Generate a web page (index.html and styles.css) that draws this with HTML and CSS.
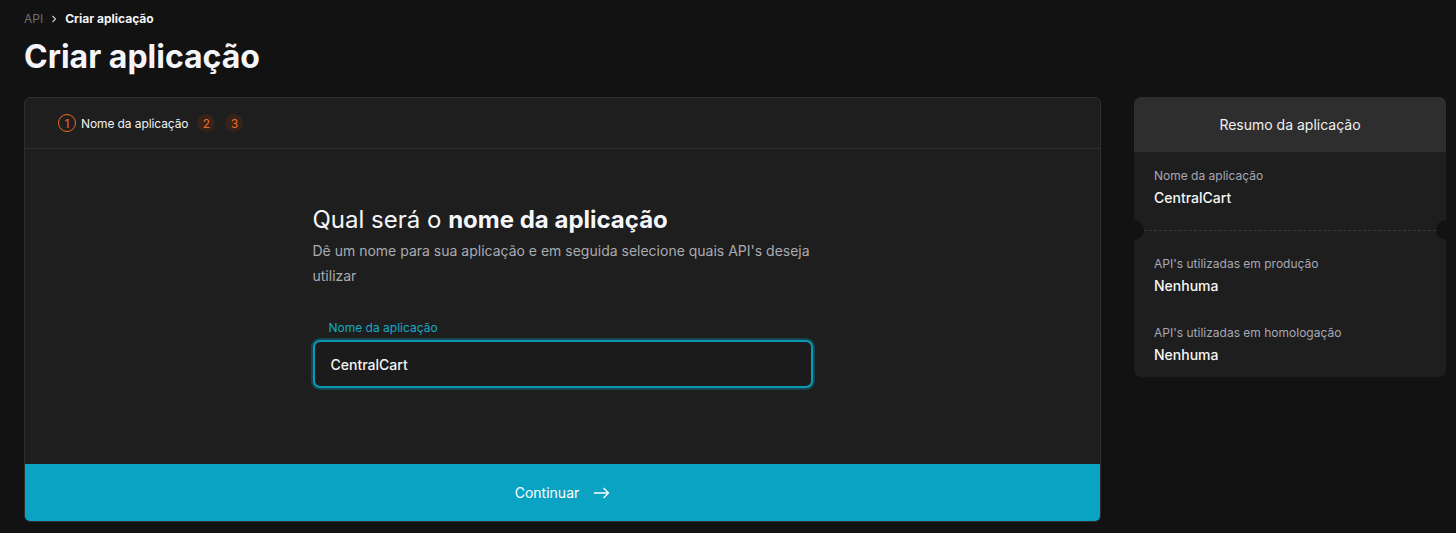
FILE: index.html
```html
<!DOCTYPE html>
<html lang="pt-BR">
<head>
<meta charset="UTF-8">
<meta name="viewport" content="width=device-width, initial-scale=1.0">
<title>Criar aplicação</title>
<link rel="stylesheet" href="styles.css">
</head>
<body>
<div class="page">
    <div class="breadcrumb">
        <span class="crumb-link">API</span>
        <svg class="crumb-sep" width="8" height="8" viewBox="0 0 8 8"><path d="M2.5 1 L5.5 4 L2.5 7" fill="none" stroke="#cfcfcf" stroke-width="1.1"/></svg>
        <span class="crumb-current">Criar aplicação</span>
    </div>
    <h1 class="page-title">Criar aplicação</h1>

    <div class="layout">
        <div class="card">
            <div class="stepper">
                <span class="step-num active">1</span>
                <span class="step-label">Nome da aplicação</span>
                <span class="step-num">2</span>
                <span class="step-num">3</span>
            </div>

            <div class="card-body">
                <div class="form-box">
                    <h2 class="question">Qual será o <b>nome da aplicação</b></h2>
                    <p class="hint">Dê um nome para sua aplicação e em seguida selecione quais API's deseja utilizar</p>

                    <label class="field-label" for="app-name">Nome da aplicação</label>
                    <input class="field-input" id="app-name" type="text" value="CentralCart">
                </div>
            </div>

            <button class="continue-btn">
                <span>Continuar</span>
                <svg width="17" height="12" viewBox="0 0 17 12"><path d="M1 6 H15.5 M10.5 1 L15.5 6 L10.5 11" fill="none" stroke="#fff" stroke-width="1.3"/></svg>
            </button>
        </div>

        <div class="summary">
            <div class="summary-head">Resumo da aplicação</div>
            <div class="summary-part top">
                <div class="sum-label">Nome da aplicação</div>
                <div class="sum-value">CentralCart</div>
            </div>
            <div class="summary-part bottom">
                <div class="sum-label">API's utilizadas em produção</div>
                <div class="sum-value">Nenhuma</div>
                <div class="sum-label second">API's utilizadas em homologação</div>
                <div class="sum-value">Nenhuma</div>
            </div>
        </div>
    </div>
</div>
</body>
</html>
```

FILE: styles.css
```css
html, body {
    margin: 0;
    background: #121212;
    color: #f2f2f2;
    font-family: "Inter", "Noto Sans", sans-serif;
}

.page {
    padding: 11px 10px 0 24px;
}

/* breadcrumb */
.breadcrumb {
    display: flex;
    align-items: center;
    gap: 7px;
    font-size: 12px;
    line-height: 16px;
}
.crumb-link {
    color: #6e6e74;
}
.crumb-current {
    color: #f4f4f4;
    font-weight: 700;
}

.page-title {
    margin: 10px 0 0;
    font-size: 32px;
    line-height: 40px;
    font-weight: 700;
    color: #f3f5f8;
}

.layout {
    display: flex;
    align-items: flex-start;
    gap: 33px;
    margin-top: 20px;
}

/* main card */
.card {
    width: 1077px;
    background: #1e1e1e;
    border: 1px solid #2e2e2e;
    border-radius: 6px;
    overflow: hidden;
    box-sizing: border-box;
}

.stepper {
    display: flex;
    align-items: center;
    height: 50px;
    padding-left: 33px;
    border-bottom: 1px solid #2e2e2e;
}
.step-num {
    width: 18px;
    height: 18px;
    border-radius: 50%;
    display: flex;
    align-items: center;
    justify-content: center;
    background: #36241a;
    color: #f06a25;
    font-size: 12px;
    box-sizing: border-box;
    margin-right: 10px;
}
.step-num.active {
    background: transparent;
    border: 1px solid #f06a25;
    margin-right: 5px;
}
.step-label {
    color: #f2f2f2;
    font-size: 12px;
    letter-spacing: -0.1px;
    margin-right: 9px;
}

.card-body {
    display: flex;
    justify-content: center;
    padding: 56px 0 76px;
}
.form-box {
    width: 500px;
}
.question {
    margin: 0;
    font-size: 24px;
    line-height: 30px;
    font-weight: 400;
    color: #f4f6f9;
}
.question b {
    font-weight: 700;
}
.hint {
    margin: 3px 0 0;
    font-size: 14px;
    line-height: 25px;
    color: #a9abb1;
}
.field-label {
    display: block;
    margin: 32px 0 0 16px;
    font-size: 12px;
    line-height: 16px;
    color: #17a9c6;
}
.field-input {
    display: block;
    width: 500px;
    height: 48px;
    margin-top: 4px;
    box-sizing: border-box;
    padding: 0 16px;
    background: #1b1b1b;
    border: 2px solid #0b98b4;
    border-radius: 7px;
    box-shadow: 0 0 0 2px rgba(11, 120, 140, 0.45);
    color: #f4f4f4;
    font-family: inherit;
    font-size: 14px;
    font-weight: 500;
    outline: none;
}

.continue-btn {
    display: flex;
    width: 100%;
    height: 57px;
    align-items: center;
    justify-content: center;
    gap: 14px;
    border: 0;
    background: #0ba3c3;
    color: #fff;
    font-family: inherit;
    font-size: 14px;
    cursor: pointer;
}

/* summary */
.summary {
    width: 312px;
    background: #1e1e1e;
    border-radius: 7px;
    overflow: hidden;
}
.summary-head {
    height: 55px;
    background: #2e2e2e;
    display: flex;
    align-items: center;
    justify-content: center;
    font-size: 14px;
    color: #f0f0f0;
}
.summary-part {
    position: relative;
    padding: 0 20px;
}
.summary-part.top {
    padding-top: 16px;
    padding-bottom: 22px;
    border-bottom: 1px dashed #3a3a3a;
}
.summary-part.top::before,
.summary-part.top::after {
    content: "";
    position: absolute;
    bottom: -10px;
    width: 20px;
    height: 20px;
    border-radius: 50%;
    background: #121212;
}
.summary-part.top::before { left: -10px; }
.summary-part.top::after { right: -10px; }

.summary-part.bottom {
    padding-top: 25px;
    padding-bottom: 12px;
}
.sum-label {
    font-size: 12px;
    line-height: 16px;
    color: #a6a8b4;
}
.sum-label.second {
    margin-top: 29px;
}
.sum-value {
    margin-top: 4px;
    font-size: 14px;
    line-height: 20px;
    font-weight: 500;
    color: #f6f6f6;
}
```
